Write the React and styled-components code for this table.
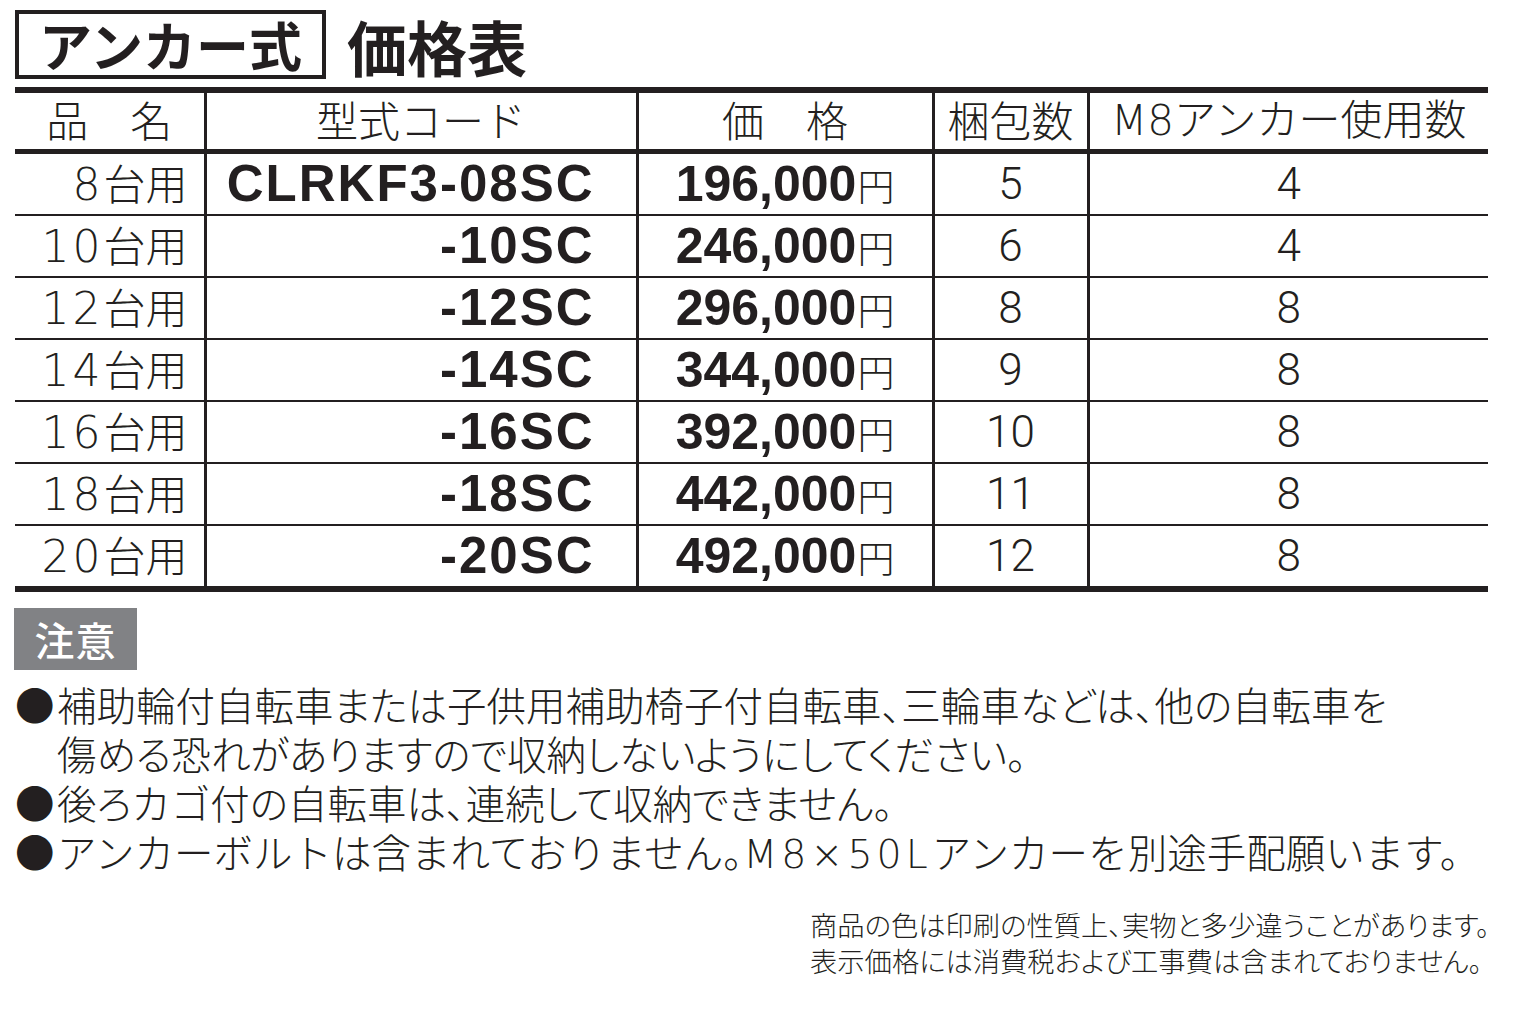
import styled, { createGlobalStyle } from 'styled-components'

const INK = '#231f20'
const JP = `'Noto Sans CJK JP', 'Noto Sans', sans-serif`
const LATIN_BOLD = `'Liberation Sans', Arial, sans-serif`
const LATIN_WIDE = `'DejaVu Sans', 'Noto Sans', sans-serif`

const GlobalStyle = createGlobalStyle`
  html, body {
    margin: 0;
    padding: 0;
    background: #fff;
  }
  body {
    color: ${INK};
    font-family: ${JP};
  }
`

const Page = styled.div`
  width: 1533px;
  padding: 10px 0 0 15px;
  box-sizing: border-box;
`

const TitleRow = styled.div`
  display: flex;
  align-items: flex-end;
  gap: 21px;
  height: 69px;
`

const TitleBox = styled.div`
  box-sizing: border-box;
  height: 69px;
  width: 311px;
  border: 4px solid ${INK};
  display: flex;
  align-items: center;
  justify-content: center;
  font-size: 53px;
  font-weight: 700;
  line-height: 1;
`

const TitleText = styled.div`
  font-size: 60px;
  font-weight: 700;
  line-height: 1;
  transform: translateY(-3px);
`

const Table = styled.table`
  margin-top: 8px;
  width: 1473px;
  border-collapse: collapse;
  table-layout: fixed;
  border-top: 6px solid ${INK};
  border-bottom: 6px solid ${INK};
`

const HeadCell = styled.th`
  height: 61px;
  box-sizing: border-box;
  padding: 0 0 3px;
  font-weight: 300;
  font-size: 42px;
  line-height: 1;
  text-align: center;
  white-space: pre;
  border-bottom: 5px solid ${INK};
  border-left: ${({ $first }) => ($first ? 'none' : `3px solid ${INK}`)};
`

const Latin = styled.span`
  font-family: ${LATIN_WIDE};
  font-weight: 200;
  letter-spacing: ${({ $gap }) => $gap || 0}px;
`

// katakana keeps full-width metrics, the rest of the copy is set proportional
const Kata = styled.span`
  font-feature-settings: normal;
`

const Row = styled.tr`
  border-bottom: 2px solid ${INK};
  &:last-child {
    border-bottom: none;
  }
`

const Cell = styled.td`
  height: 60px;
  padding: 0 ${({ $padRight }) => $padRight || 0}px 0 0;
  line-height: 1;
  text-align: ${({ $align }) => $align || 'center'};
  white-space: nowrap;
  border-left: ${({ $first }) => ($first ? 'none' : `3px solid ${INK}`)};
`

const Label = styled.span`
  font-size: 42px;
  font-weight: 300;
`

const LabelNum = styled.span`
  font-family: ${LATIN_WIDE};
  font-size: 44px;
  font-weight: 200;
  letter-spacing: 3px;
`

const Code = styled.span`
  font-family: ${LATIN_BOLD};
  font-weight: 700;
  font-size: 51px;
  letter-spacing: 2px;
`

const Price = styled.span`
  font-family: ${LATIN_BOLD};
  font-weight: 700;
  font-size: 50px;
`

const Yen = styled.span`
  font-size: 37px;
  font-weight: 300;
  margin-left: 1px;
`

const Count = styled.span`
  font-family: Roboto, 'Liberation Sans', sans-serif;
  font-weight: 300;
  font-size: 44px;
`

const NoticeTag = styled.div`
  margin-top: 16px;
  margin-left: -1px;
  width: 123px;
  height: 62px;
  background: #818285;
  color: #fff;
  font-size: 40px;
  font-weight: 500;
  display: flex;
  align-items: center;
  justify-content: center;
  letter-spacing: 1px;
`

const Notes = styled.ul`
  list-style: none;
  margin: 9px 0 0 0;
  padding: 0;
  font-size: 39.5px;
  font-weight: 300;
  line-height: 49px;
`

const Note = styled.li`
  display: flex;
  font-feature-settings: ${({ $fixed }) => ($fixed ? "'halt'" : "'palt'")};
`

const Bullet = styled.span`
  flex: none;
  width: 42px;
  font-feature-settings: normal;
`

const Footer = styled.div`
  margin-top: 27px;
  padding-left: 795px;
  font-size: 27.3px;
  font-weight: 300;
  line-height: 36px;
  white-space: nowrap;
  font-feature-settings: 'palt';
`

const setText = (text) =>
  text
    .split(/([ァ-ヶー]+)/)
    .map((part, i) =>
      /^[ァ-ヶー]+$/.test(part) ? <Kata key={i}>{part}</Kata> : part
    )

const columns = [
  { key: 'name', width: 190, title: '品　名' },
  { key: 'code', width: 432, title: '型式コード' },
  { key: 'price', width: 296, title: '価　格' },
  { key: 'pack', width: 155, title: '梱包数' },
  {
    key: 'anchor',
    width: 400,
    title: (
      <>
        <Latin>M8</Latin>アンカー使用数
      </>
    ),
  },
]

const rows = [
  { n: '8', code: 'CLRKF3-08SC', price: '196,000', pack: 5, anchor: 4 },
  { n: '10', code: '-10SC', price: '246,000', pack: 6, anchor: 4 },
  { n: '12', code: '-12SC', price: '296,000', pack: 8, anchor: 8 },
  { n: '14', code: '-14SC', price: '344,000', pack: 9, anchor: 8 },
  { n: '16', code: '-16SC', price: '392,000', pack: 10, anchor: 8 },
  { n: '18', code: '-18SC', price: '442,000', pack: 11, anchor: 8 },
  { n: '20', code: '-20SC', price: '492,000', pack: 12, anchor: 8 },
]

const notes = [
  {
    lines: [
      setText('補助輪付自転車または子供用補助椅子付自転車、三輪車などは、他の自転車を'),
      setText('傷める恐れがありますので収納しないようにしてください。'),
    ],
  },
  { lines: [setText('後ろカゴ付の自転車は、連続して収納できません。')] },
  {
    fixed: true,
    lines: [
      <>
        {setText('アンカーボルトは含まれておりません。')}
        <Latin $gap={4}>M8×50L</Latin>
        {setText('アンカーを別途手配願います。')}
      </>,
    ],
  },
]

export default function App() {
  return (
    <Page>
      <GlobalStyle />
      <TitleRow>
        <TitleBox>アンカー式</TitleBox>
        <TitleText>価格表</TitleText>
      </TitleRow>

      <Table>
        <colgroup>
          {columns.map((c) => (
            <col key={c.key} style={{ width: c.width }} />
          ))}
        </colgroup>
        <thead>
          <tr>
            {columns.map((c, i) => (
              <HeadCell key={c.key} $first={i === 0}>
                {c.title}
              </HeadCell>
            ))}
          </tr>
        </thead>
        <tbody>
          {rows.map((r) => (
            <Row key={r.n}>
              <Cell $first $align='right' $padRight={16}>
                <LabelNum>{r.n}</LabelNum>
                <Label>台用</Label>
              </Cell>
              <Cell $align='right' $padRight={41}>
                <Code>{r.code}</Code>
              </Cell>
              <Cell>
                <Price>{r.price}</Price>
                <Yen>円</Yen>
              </Cell>
              <Cell>
                <Count>{r.pack}</Count>
              </Cell>
              <Cell>
                <Count>{r.anchor}</Count>
              </Cell>
            </Row>
          ))}
        </tbody>
      </Table>

      <NoticeTag>注意</NoticeTag>
      <Notes>
        {notes.map((n, i) => (
          <Note key={i} $fixed={n.fixed}>
            <Bullet>●</Bullet>
            <div>
              {n.lines.map((l, j) => (
                <div key={j}>{l}</div>
              ))}
            </div>
          </Note>
        ))}
      </Notes>

      <Footer>
        <div>商品の色は印刷の性質上、実物と多少違うことがあります。</div>
        <div>表示価格には消費税および工事費は含まれておりません。</div>
      </Footer>
    </Page>
  )
}
